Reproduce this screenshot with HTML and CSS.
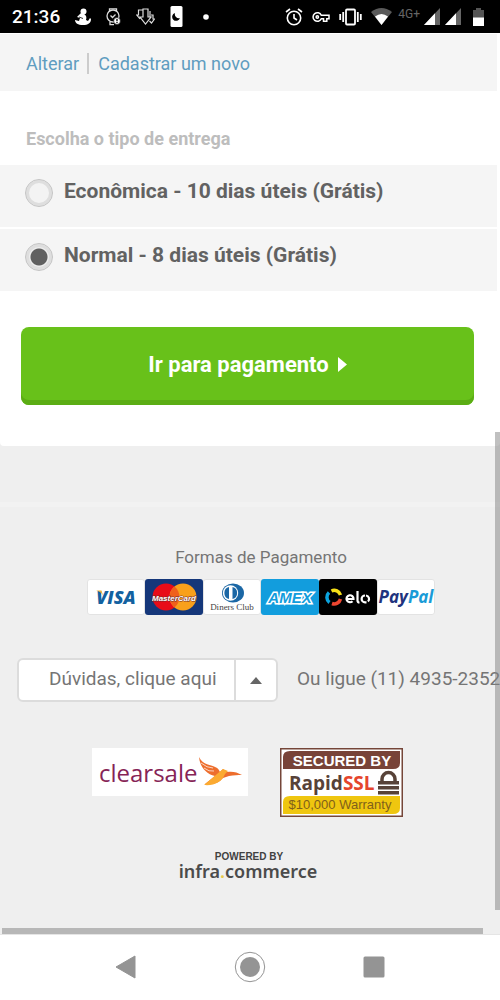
FILE: index.html
```html
<!DOCTYPE html>
<html lang="pt-BR">
<head>
<meta charset="utf-8">
<meta name="viewport" content="width=device-width, initial-scale=1">
<title>Entrega</title>
<link rel="stylesheet" href="styles.css">
</head>
<body>
<div class="screen">
  <header class="status">
    <div class="status-left">
      <span class="clock">21:36</span>
      <svg width="16" height="18" viewBox="0 0 16 18" fill="#fff"><circle cx="8.500" cy="3.500" r="3"/><path d="M6 5 2 9l3 1-1 3-4-1c0 3 3 5 8 5s8-2 8-6l-1-1-2 3-2-1c1-3 0-5-2-6z"/><path d="m4 9 4 1.500" fill="none" stroke="#000" stroke-width=".8"/></svg>
      <svg width="15" height="18" viewBox="0 0 15 18" fill="none" stroke="#ddd" stroke-width="1.300"><circle cx="7" cy="8" r="6"/><path d="M3.500 3V.8h7V3M4 13.500v3.200h4M4.500 7.500l2 2 3-3"/><circle cx="11" cy="13" r="3.400" fill="#fff" stroke="#000" stroke-width=".6"/><path d="M11 11v2.300m0 .8v.8" stroke="#000"/></svg>
      <svg width="19" height="18" viewBox="0 0 19 18" fill="none" stroke="#ddd" stroke-width="1.200"><path d="M7 1h5v8h3l-5.500 7L4 9h3zM7 2H2.500v5H.8L4 11M14 3v6m1-2h2v4h1.500l-3 4-2-2"/></svg>
      <svg width="13" height="22" viewBox="0 0 13 22"><rect x=".5" width="12" height="21" rx="1.500" fill="#fff"/><path d="M5 7a4 4 0 1 0 5 5 4 4 0 0 1-5-5z" fill="#000"/></svg>
      <svg class="dot" width="6" height="6" viewBox="0 0 6 6"><circle cx="3" cy="3" r="2.800" fill="#fff"/></svg>
    </div>
    <div class="status-right">
      <svg width="18" height="18" viewBox="0 0 18 18" fill="none" stroke="#fff" stroke-width="1.600"><circle cx="9" cy="10" r="6.700"/><path d="M9 6v4l3 2M1 4l4-3M17 4l-4-3"/></svg>
      <svg width="18" height="12" viewBox="0 0 18 12" fill="none" stroke="#fff" stroke-width="1.500"><path d="M9.300 4.300A4.300 4.300 0 1 0 9.300 7.700h2.200v2.500h3.300V7.700H17V4.300z"/><circle cx="5.300" cy="6" r="1.200"/></svg>
      <svg width="23" height="18" viewBox="0 0 23 18" fill="none" stroke="#fff" stroke-width="1.800"><rect x="7" y="1.500" width="9" height="15" rx="1"/><path d="M4.200 4v10M1.200 6v6M18.800 4v10M21.800 6v6"/></svg>
      <svg width="21" height="17" viewBox="0 0 21 17"><path d="M0 4Q10.500-4 21 4L10.500 17z" fill="#5a5a5a"/><path d="M4 8.500q6.500-5 13 0L10.500 17z" fill="#fff"/></svg>
      <span class="net">4G+</span>
      <svg width="16" height="17" viewBox="0 0 16 17"><path d="M16 0v17H0z" fill="#666"/><path d="M11 5.300V17H0z" fill="#fff"/></svg>
      <svg width="16" height="17" viewBox="0 0 16 17"><path d="M16 0v17H0z" fill="#666"/><path d="M11 5.300V17H0z" fill="#fff"/></svg>
      <svg class="battery" width="11" height="18" viewBox="0 0 11 18"><path d="M3 0h5v2h3v8H0V2h3z" fill="#555"/><path d="M0 9.500h11V18H0z" fill="#fff"/></svg>
    </div>
  </header>

  <div class="view">
    <main class="checkout">
      <nav class="address-links"><a href="#alterar">Alterar</a><a href="#novo">Cadastrar um novo</a></nav>
      <form class="delivery">
        <fieldset class="options">
          <legend>Escolha o tipo de entrega</legend>
          <label class="option"><input type="radio" name="entrega" value="economica"><span>Econômica - 10 dias úteis (Grátis)</span></label>
          <label class="option"><input type="radio" name="entrega" value="normal" checked><span>Normal - 8 dias úteis (Grátis)</span></label>
        </fieldset>
        <button class="pay" type="button">Ir para pagamento
          <svg width="9" height="15" viewBox="0 0 9 15"><path d="M0 0l9 7.500L0 15z" fill="#fff"/></svg>
        </button>
      </form>
    </main>

    <footer class="footer">
      <h2 class="pay-title">Formas de Pagamento</h2>
      <div class="cards">
        <svg class="card" viewBox="0 0 58 36" role="img" aria-label="Visa"><rect x=".5" y=".5" width="57" height="35" rx="2.500" fill="#fff" stroke="#e3e3e3"/><text x="29" y="25" class="visa">VISA</text><path d="M9 11.500h5.500l1.500 5q-2-4-7-5z" fill="#e9b13b"/></svg>
        <svg class="card" viewBox="0 0 58 36" role="img" aria-label="MasterCard"><rect width="58" height="36" rx="3" fill="#15377a"/><circle cx="21" cy="18" r="13.500" fill="#e80c18"/><circle cx="38" cy="18" r="13.500" fill="#f9a01b"/><path d="M29.500 7.500a13.500 13.500 0 0 1 0 21 13.500 13.500 0 0 1 0-21z" fill="#f0601c"/><text x="29" y="22" class="master">MasterCard</text></svg>
        <svg class="card" viewBox="0 0 58 36" role="img" aria-label="Diners Club"><rect x=".5" y=".5" width="57" height="35" rx="2.500" fill="#fff" stroke="#e3e3e3"/><ellipse cx="30" cy="14" rx="11" ry="9.500" fill="#1b67a5"/><circle cx="27.500" cy="14" r="7.700" fill="#fff"/><path d="M26 8a6.200 6.200 0 0 0 0 12zM29.500 8a6.200 6.200 0 0 1 0 12z" fill="#1b67a5"/><text x="29" y="31" class="diners">Diners Club</text></svg>
        <svg class="card" viewBox="0 0 58 36" role="img" aria-label="Amex"><rect width="58" height="36" rx="3" fill="#129ddd"/><text x="29" y="24" class="amex">AMEX</text></svg>
        <svg class="card" viewBox="0 0 58 36" role="img" aria-label="Elo"><rect width="58" height="36" rx="3" fill="#000"/><g fill="none" stroke-width="3.500"><path d="M12.500 12a6.500 6.500 0 0 1 9 4" stroke="#f6df18"/><path d="M10.500 23.500a6.500 6.500 0 0 1-.5-10" stroke="#0ba4df"/><path d="M21.500 20a6.500 6.500 0 0 1-8.500 4.500" stroke="#ed4630"/></g><g fill="none" stroke="#fff" stroke-width="2.200"><path d="M28 20h6.500a3.500 3.500 0 1 0-1 2.200M38.500 12v9.500q0 2 2 2M47.500 23.300h-1.500a3.400 3.400 0 0 1 0-6.800M47 16.500a3.500 3.500 0 0 1 2 6"/></g></svg>
        <svg class="card" viewBox="0 0 58 36" role="img" aria-label="PayPal"><rect x=".5" y=".5" width="57" height="35" rx="2.500" fill="#fff" stroke="#e3e3e3"/><text x="29" y="24" class="paypal">Pay<tspan fill="#1a9bd7">Pal</tspan></text></svg>
      </div>

      <div class="help">
        <button class="help-menu" type="button"><span class="help-text">Dúvidas, clique aqui</span><span class="help-arrow"><svg width="12" height="7" viewBox="0 0 12 7"><path d="M6 0l6 7H0z" fill="#666"/></svg></span></button>
        <span class="phone">Ou ligue (11) 4935-2352</span>
      </div>

      <div class="seals">
        <svg width="156" height="48" viewBox="0 0 156 48" role="img" aria-label="clearsale"><rect width="156" height="48" fill="#fff"/><text x="7" y="34" class="clear">clearsale</text><path d="M107 9c1 10 7 17 16 19l-10 8c8 1 14-1 18-6l6-2c5-1 9-1 13-1-5-3-10-4-15-3l-4-3-3 3C125 15 112 20 107 9z" fill="#ed6e2d"/><path d="M112 37l13-11 6-5 5 2-3 3c-3 8-11 12-21 11z" fill="#fbaa31"/><path d="M109 15q6 5 12 5M112 20q5 4 10 3" fill="none" stroke="#fff" stroke-width=".7"/></svg>
        <svg width="123" height="69" viewBox="0 0 123 69" role="img" aria-label="Secured by RapidSSL"><rect x=".75" y=".75" width="121.500" height="67.500" fill="#fff" stroke="#754639" stroke-width="1.500"/><path d="M3 3h117v12q0 6-7 6H3V9q0-6 7-6z" fill="#784338"/><text x="62" y="18" class="secured">SECURED BY</text><text x="9" y="42" class="rapid">Rapid<tspan fill="#e5452d">SSL</tspan></text><path d="M102 34v-3a6.500 6.500 0 0 1 13 0v3" fill="none" stroke="#574238" stroke-width="3.500"/><path d="M98 33h21v3.500H98zM98 38h21v3.500H98zM98 43h21v3.500H98z" fill="#574238"/><path d="M3 66V54q0-6 7-6h110v12q0 6-7 6z" fill="#efc60f"/><text x="60" y="61" class="warranty">$10,000 Warranty</text></svg>
      </div>
      <div class="powered"><svg width="142" height="32" viewBox="0 0 142 32" role="img" aria-label="Powered by infracommerce"><text x="72" y="8" class="powered-by">POWERED BY</text><text x="71" y="26" class="infra">infra<tspan fill="#e8c94a">.</tspan>commerce</text></svg></div>
    </footer>
    <div class="scroll-y"></div>
    <div class="scroll-x"></div>
  </div>

  <nav class="system">
    <button type="button" aria-label="Voltar"><svg width="32" height="32" viewBox="0 0 32 32"><path d="M6 16L25 5v22z" fill="#949494" stroke="#949494" stroke-linejoin="round"/></svg></button>
    <button type="button" aria-label="Início"><svg width="32" height="32" viewBox="0 0 32 32"><circle cx="16" cy="16" r="14.700" fill="none" stroke="#949494"/><circle cx="16" cy="16" r="10" fill="#949494"/></svg></button>
    <button type="button" aria-label="Recentes"><svg width="32" height="32" viewBox="0 0 32 32"><rect x="5.500" y="5.500" width="21" height="21" rx="1.500" fill="#949494"/></svg></button>
  </nav>
</div>
</body>
</html>
```
FILE: styles.css
```css
* { box-sizing: border-box; }
body { margin: 0; background: #fff; color: #666; font-family: Roboto, "Liberation Sans", sans-serif; }
svg { display: block; flex: none; }
button { margin: 0; padding: 0; border: 0; background: none; color: inherit; font: inherit; }
.screen { min-height: 100vh; display: flex; flex-direction: column; }

.status { height: 33px; padding: 0 16px 0 12px; display: flex; align-items: center; justify-content: space-between; background: #000; color: #fff; }
.status-left { display: flex; align-items: center; gap: 15px; }
.clock { font-size: 19px; font-weight: 500; }
.dot { margin-left: 5px; }
.status-right { display: flex; align-items: center; gap: 9px; }
.net { align-self: flex-start; margin: 0 -5px 0 -3px; font-size: 12px; line-height: 12px; color: #666; }
.status-right svg + svg:nth-last-child(2) { margin-left: -4px; }
.battery { margin-left: 3px; }

.view { position: relative; flex: 1; display: flex; flex-direction: column; overflow: hidden; background: #efefef; }
.checkout { padding: 1px 3px 41px 0; background: #fff; border-radius: 0 0 4px 4px; }
.address-links { padding: 19px 26px 17px; display: flex; align-items: center; background: #f5f5f5; font-size: 18px; line-height: 21px; }
.address-links a { color: #5f9dc0; text-decoration: none; }
.address-links a + a { margin-left: 8px; padding-left: 9px; border-left: 2px solid #ccc; }
.options { margin: 0; padding: 0; border: 0; display: flex; flex-direction: column; gap: 2px; }
.options legend { padding: 37px 26px 16px; font-size: 18px; line-height: 21px; font-weight: 700; color: #bdbdbd; }
.option { display: flex; align-items: flex-start; gap: 11px; padding: 12px 25px 20px; background: #f5f5f5; font-size: 21px; line-height: 28px; font-weight: 700; color: #626262; }
.option input { flex: none; appearance: none; width: 28px; height: 28px; margin: 2px 0 0; border: 1px solid #c4c4c4; border-radius: 50%; background: #f3f3f3; box-shadow: inset 0 0 0 3px #dedede; }
.option input:checked { background: radial-gradient(circle, #606060 0 8px, #eee 9px); }
.pay { width: calc(100% - 44px); margin: 36px 23px 0 21px; height: 78px; display: flex; align-items: center; justify-content: center; gap: 9px; padding-bottom: 4px; border-radius: 8px; background: #68c11a; box-shadow: inset 0 -5px 0 #5bad14; color: #fff; font-size: 22px; font-weight: 700; }

.footer { margin-top: 56px; padding-top: 40px; border-top: 5px solid #f2f2f2; color: #757575; }
.pay-title { margin: 0 0 12px 22px; text-align: center; font-size: 17px; line-height: 20px; font-weight: 400; }
.cards { display: flex; justify-content: center; margin-left: 22px; }
.card { width: 58px; height: 36px; }
.card text { text-anchor: middle; }
.visa { font: italic 800 18px "Open Sans", sans-serif; fill: #1261a0; }
.master { font: italic 700 8px "Liberation Sans", sans-serif; fill: #fff; stroke: #732a2a; stroke-width: 1px; paint-order: stroke; }
.diners { font: 9px "Liberation Serif", serif; fill: #444; }
.amex { font: italic 700 15px "Liberation Sans", sans-serif; fill: #129ddd; stroke: #fff; stroke-width: 3px; paint-order: stroke; }
.paypal { font: italic 700 17px "Open Sans", sans-serif; fill: #21337e; }

.help { display: flex; align-items: center; gap: 19px; margin: 43px 0 0 17px; white-space: nowrap; font-size: 19px; }
.help-menu { flex: none; display: flex; align-items: stretch; width: 261px; height: 44px; background: #fff; border: 2px solid #dcdcdc; border-radius: 6px; }
.help-text { flex: 1; padding-left: 30px; text-align: left; line-height: 38px; }
.help-arrow { display: flex; align-items: center; justify-content: center; width: 42px; border-left: 2px solid #dcdcdc; }
.phone { line-height: 24px; padding-bottom: 2px; }
.seals { display: flex; align-items: flex-start; justify-content: center; gap: 32px; margin: 46px 5px 0 0; }
.clear { font: 24px "Open Sans", sans-serif; fill: #862456; }
.secured { font: 700 15px "Liberation Sans", sans-serif; fill: #fff; text-anchor: middle; }
.rapid { font: 700 19px "Open Sans", sans-serif; fill: #574238; }
.warranty { font: 13px "Liberation Sans", sans-serif; fill: #80601b; text-anchor: middle; }
.powered { display: flex; justify-content: center; margin: 35px 4px 47px 0; }
.powered-by { font: 700 10px "Liberation Sans", sans-serif; fill: #414141; text-anchor: middle; }
.infra { font: 600 18px "Noto Sans", sans-serif; fill: #4b4b4b; text-anchor: middle; }

.scroll-y { position: absolute; right: 0; top: 399px; bottom: 24px; width: 5px; background: rgba(130, 130, 130, .5); }
.scroll-x { position: absolute; left: 2px; right: 17px; bottom: 0; height: 6px; background: #b7b7b7; }
.system { height: 66px; padding-bottom: 2px; display: flex; align-items: center; justify-content: center; gap: 92px; border-top: 1px solid #e5e5e5; background: #fff; }
```
